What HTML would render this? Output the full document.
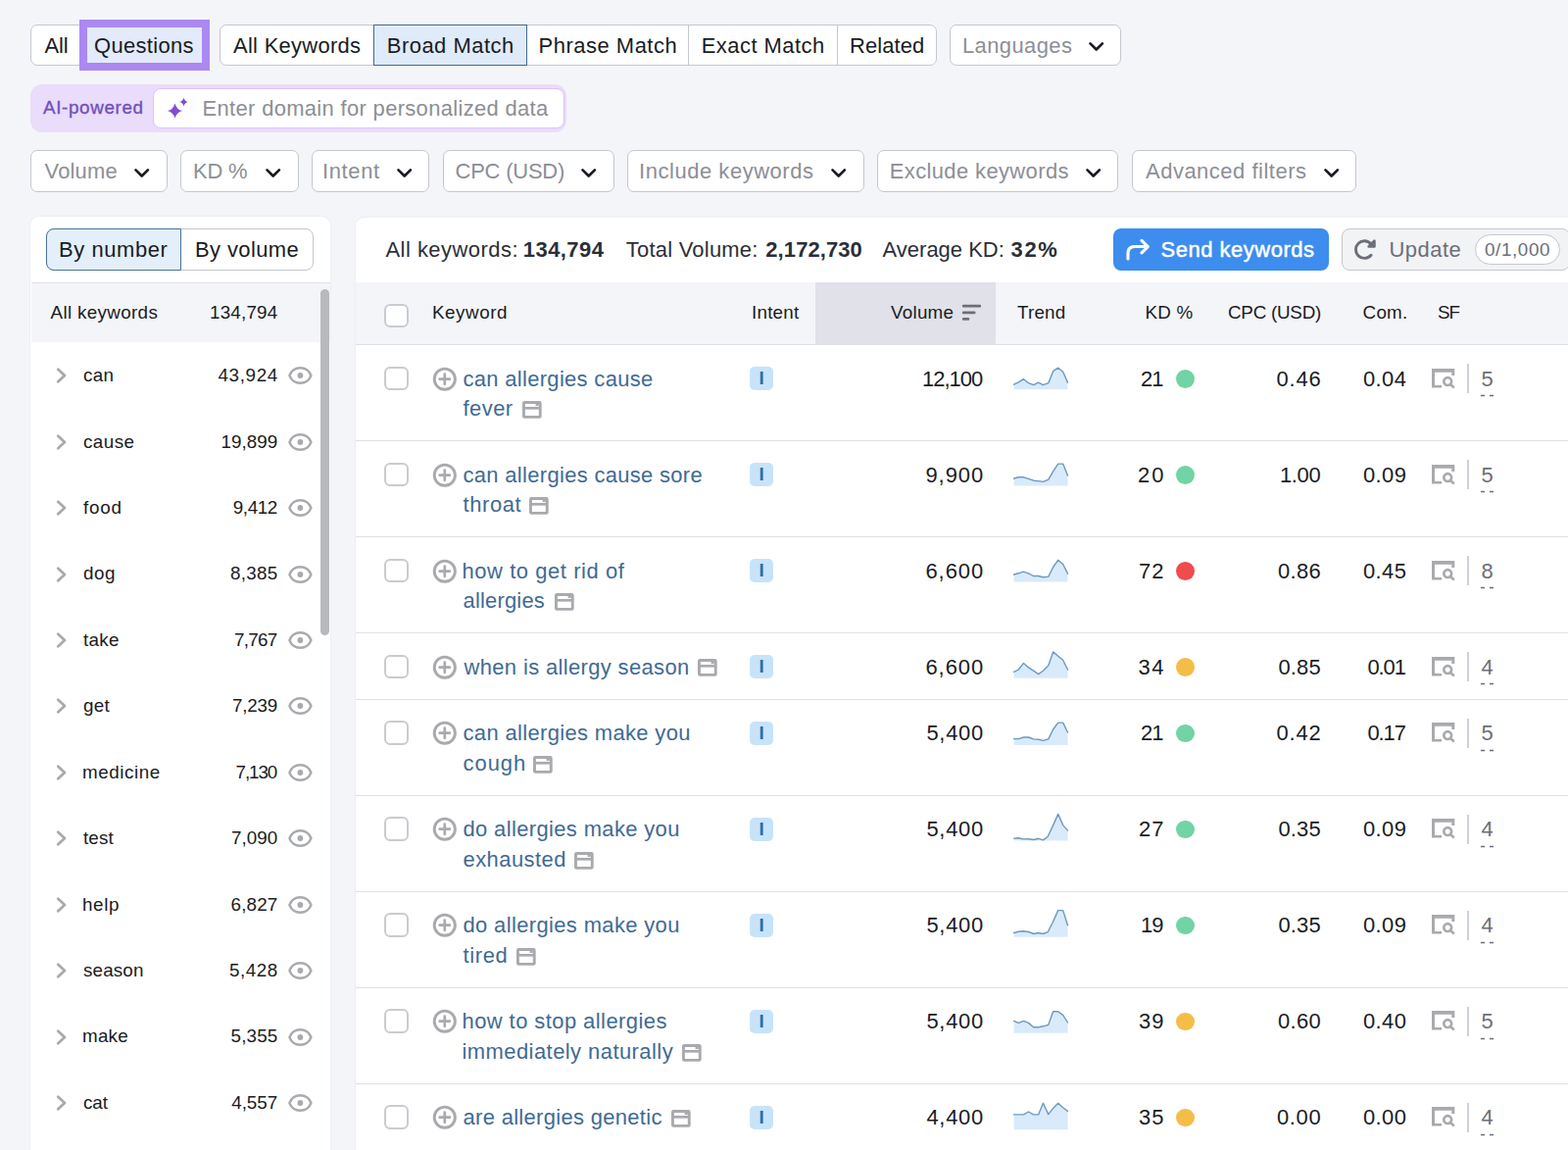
<!DOCTYPE html>
<html lang="en"><head><meta charset="utf-8"><title>Keyword Magic Tool</title>
<style>
html,body{margin:0;padding:0}
body{width:1600px;height:1173px;overflow:hidden;position:relative;background:#f4f5f9;font-family:"Liberation Sans", sans-serif}
.a{position:absolute;box-sizing:border-box;display:block}
.t{white-space:nowrap}
</style></head><body>
<div class="a" style="left:31px;top:24.8px;width:180px;height:42px;background:#fff;border:1px solid #c4c7cf;border-radius:7px;"></div>
<span class="a t" id="t0" style="left:45.50px;top:36.00px;font-size:21.95px;line-height:21.95px;color:#191b23;letter-spacing:-0.133px;">All</span>
<div class="a" style="left:81px;top:20.2px;width:133.2px;height:51.5px;background:#ab89f2;"></div>
<div class="a" style="left:88.8px;top:28.2px;width:117.6px;height:35.8px;background:#e3eafb;"></div>
<span class="a t" id="t1" style="left:96.00px;top:36.00px;font-size:21.95px;line-height:21.95px;color:#191b23;letter-spacing:0.336px;">Questions</span>
<div class="a" style="left:224px;top:24.8px;width:732px;height:42px;background:#fff;border:1px solid #c4c7cf;border-radius:7px;"></div>
<div class="a" style="left:381px;top:24.8px;width:157px;height:42px;background:#e0ebfa;border:1px solid #41698f;"></div>
<div class="a" style="left:702px;top:25.8px;width:1px;height:40px;background:#c4c7cf;"></div>
<div class="a" style="left:854px;top:25.8px;width:1px;height:40px;background:#c4c7cf;"></div>
<span class="a t" id="t2" style="left:238.00px;top:36.00px;font-size:21.95px;line-height:21.95px;color:#191b23;letter-spacing:0.288px;">All Keywords</span>
<span class="a t" id="t3" style="left:394.75px;top:36.00px;font-size:21.95px;line-height:21.95px;color:#191b23;letter-spacing:0.508px;">Broad Match</span>
<span class="a t" id="t4" style="left:549.50px;top:36.00px;font-size:21.95px;line-height:21.95px;color:#191b23;letter-spacing:0.532px;">Phrase Match</span>
<span class="a t" id="t5" style="left:715.70px;top:36.00px;font-size:21.95px;line-height:21.95px;color:#191b23;letter-spacing:0.480px;">Exact Match</span>
<span class="a t" id="t6" style="left:867.00px;top:36.00px;font-size:21.95px;line-height:21.95px;color:#191b23;letter-spacing:0.096px;">Related</span>
<div class="a" style="left:969px;top:24.8px;width:175px;height:42px;background:#fff;border:1px solid #c4c7cf;border-radius:7px;"></div>
<span class="a t" id="t7" style="left:982.00px;top:36.00px;font-size:21.95px;line-height:21.95px;color:#8c8e96;letter-spacing:0.424px;">Languages</span>
<svg class="a" style="left:1109px;top:41px;" width="20" height="14" viewBox="0 0 20 14"><path d="M3.5 3.4 L9.7 9.5 L15.9 3.4" fill="none" stroke="#191b23" stroke-width="2.7" stroke-linecap="round" stroke-linejoin="round"/></svg>
<div class="a" style="left:31px;top:86px;width:546.5px;height:48.8px;background:#eadcfb;border-radius:12px;"></div>
<div class="a" style="left:155.5px;top:89.5px;width:420px;height:41.5px;background:#fff;border:1px solid #dcc4f7;border-radius:8px;"></div>
<span class="a t" id="t8" style="left:44.00px;top:101.00px;font-size:18.81px;line-height:18.81px;color:#7150bc;letter-spacing:0.648px;-webkit-text-stroke:0.35px #7150bc;">AI-powered</span>
<svg class="a" style="left:170px;top:99px;" width="24" height="24" viewBox="0 0 24 24"><path d="M8.5 6.40 Q10.04 12.56 16.20 14.1 Q10.04 15.64 8.5 21.80 Q6.96 15.64 0.80 14.1 Q6.96 12.56 8.5 6.40 Z" fill="#7d4fcf"/><path d="M17.5 0.70 Q18.38 4.22 21.90 5.1 Q18.38 5.98 17.5 9.50 Q16.62 5.98 13.10 5.1 Q16.62 4.22 17.5 0.70 Z" fill="#7d4fcf"/></svg>
<span class="a t" id="t9" style="left:206.60px;top:100.00px;font-size:21.95px;line-height:21.95px;color:#8c8e96;letter-spacing:0.337px;">Enter domain for personalized data</span>
<div class="a" style="left:31px;top:153.3px;width:139.5px;height:42.5px;background:#fff;border:1px solid #c4c7cf;border-radius:7px;"></div>
<span class="a t" id="t10" style="left:45.50px;top:164.00px;font-size:21.95px;line-height:21.95px;color:#8c8e96;letter-spacing:0.206px;">Volume</span>
<svg class="a" style="left:135px;top:169.5px;" width="20" height="14" viewBox="0 0 20 14"><path d="M3.5 3.4 L9.7 9.5 L15.9 3.4" fill="none" stroke="#191b23" stroke-width="2.7" stroke-linecap="round" stroke-linejoin="round"/></svg>
<div class="a" style="left:183.5px;top:153.3px;width:121.0px;height:42.5px;background:#fff;border:1px solid #c4c7cf;border-radius:7px;"></div>
<span class="a t" id="t11" style="left:197.00px;top:164.00px;font-size:21.95px;line-height:21.95px;color:#8c8e96;letter-spacing:-0.191px;">KD %</span>
<svg class="a" style="left:269px;top:169.5px;" width="20" height="14" viewBox="0 0 20 14"><path d="M3.5 3.4 L9.7 9.5 L15.9 3.4" fill="none" stroke="#191b23" stroke-width="2.7" stroke-linecap="round" stroke-linejoin="round"/></svg>
<div class="a" style="left:317.5px;top:153.3px;width:120.5px;height:42.5px;background:#fff;border:1px solid #c4c7cf;border-radius:7px;"></div>
<span class="a t" id="t12" style="left:329.00px;top:164.00px;font-size:21.95px;line-height:21.95px;color:#8c8e96;letter-spacing:0.641px;">Intent</span>
<svg class="a" style="left:403px;top:169.5px;" width="20" height="14" viewBox="0 0 20 14"><path d="M3.5 3.4 L9.7 9.5 L15.9 3.4" fill="none" stroke="#191b23" stroke-width="2.7" stroke-linecap="round" stroke-linejoin="round"/></svg>
<div class="a" style="left:452px;top:153.3px;width:175px;height:42.5px;background:#fff;border:1px solid #c4c7cf;border-radius:7px;"></div>
<span class="a t" id="t13" style="left:464.50px;top:164.00px;font-size:21.95px;line-height:21.95px;color:#8c8e96;letter-spacing:-0.192px;">CPC (USD)</span>
<svg class="a" style="left:591px;top:169.5px;" width="20" height="14" viewBox="0 0 20 14"><path d="M3.5 3.4 L9.7 9.5 L15.9 3.4" fill="none" stroke="#191b23" stroke-width="2.7" stroke-linecap="round" stroke-linejoin="round"/></svg>
<div class="a" style="left:640px;top:153.3px;width:241.75px;height:42.5px;background:#fff;border:1px solid #c4c7cf;border-radius:7px;"></div>
<span class="a t" id="t14" style="left:652.00px;top:164.00px;font-size:21.95px;line-height:21.95px;color:#8c8e96;letter-spacing:0.565px;">Include keywords</span>
<svg class="a" style="left:845.5px;top:169.5px;" width="20" height="14" viewBox="0 0 20 14"><path d="M3.5 3.4 L9.7 9.5 L15.9 3.4" fill="none" stroke="#191b23" stroke-width="2.7" stroke-linecap="round" stroke-linejoin="round"/></svg>
<div class="a" style="left:895px;top:153.3px;width:246px;height:42.5px;background:#fff;border:1px solid #c4c7cf;border-radius:7px;"></div>
<span class="a t" id="t15" style="left:907.75px;top:164.00px;font-size:21.95px;line-height:21.95px;color:#8c8e96;letter-spacing:0.395px;">Exclude keywords</span>
<svg class="a" style="left:1105.5px;top:169.5px;" width="20" height="14" viewBox="0 0 20 14"><path d="M3.5 3.4 L9.7 9.5 L15.9 3.4" fill="none" stroke="#191b23" stroke-width="2.7" stroke-linecap="round" stroke-linejoin="round"/></svg>
<div class="a" style="left:1154.5px;top:153.3px;width:229.5px;height:42.5px;background:#fff;border:1px solid #c4c7cf;border-radius:7px;"></div>
<span class="a t" id="t16" style="left:1169.00px;top:164.00px;font-size:21.95px;line-height:21.95px;color:#8c8e96;letter-spacing:0.525px;">Advanced filters</span>
<svg class="a" style="left:1348.75px;top:169.5px;" width="20" height="14" viewBox="0 0 20 14"><path d="M3.5 3.4 L9.7 9.5 L15.9 3.4" fill="none" stroke="#191b23" stroke-width="2.7" stroke-linecap="round" stroke-linejoin="round"/></svg>
<div class="a" style="left:30.2px;top:220.3px;width:307.4px;height:960px;background:#fff;border:1px solid #eeeff3;border-radius:10px 10px 0 0;"></div>
<div class="a" style="left:47px;top:233px;width:273px;height:42.7px;background:#fff;border:1px solid #c4c7cf;border-radius:8px;"></div>
<div class="a" style="left:47px;top:233px;width:138px;height:42.7px;background:#e3effb;border:1.4px solid #4a7397;border-radius:8px 0 0 8px;"></div>
<span class="a t" id="t17" style="left:60.00px;top:244.00px;font-size:21.95px;line-height:21.95px;color:#191b23;letter-spacing:0.591px;">By number</span>
<span class="a t" id="t18" style="left:199.00px;top:244.00px;font-size:21.95px;line-height:21.95px;color:#191b23;letter-spacing:0.410px;">By volume</span>
<div class="a" style="left:31.5px;top:287.5px;width:305px;height:1px;background:#e0e1e9;"></div>
<div class="a" style="left:31.5px;top:288.5px;width:305px;height:60.5px;background:#f4f5f9;"></div>
<span class="a t" id="t19" style="left:51.50px;top:310.00px;font-size:18.81px;line-height:18.81px;color:#191b23;letter-spacing:0.344px;">All keywords</span>
<span class="a t" id="t20" style="left:214.00px;top:310.00px;font-size:18.81px;line-height:18.81px;color:#191b23;letter-spacing:0.217px;">134,794</span>
<div class="a" style="left:326.7px;top:294.5px;width:9px;height:353.5px;background:#b8b9bd;border-radius:4.5px;"></div>
<svg class="a" style="left:55px;top:373.3px;" width="16" height="20" viewBox="0 0 16 20"><path d="M4.3 3.8 L11 10 L4.3 16.2" fill="none" stroke="#a9aaae" stroke-width="2.8" stroke-linecap="round" stroke-linejoin="round"/></svg>
<span class="a t" id="t21" style="left:85.00px;top:374.00px;font-size:18.81px;line-height:18.81px;color:#191b23;letter-spacing:0.321px;">can</span>
<span class="a t" id="t22" style="left:222.50px;top:374.00px;font-size:18.81px;line-height:18.81px;color:#191b23;letter-spacing:0.651px;">43,924</span>
<svg class="a" style="left:293px;top:373.3px;" width="27" height="20" viewBox="0 0 27 20"><path d="M2.4 10 A11.66 11.66 0 0 1 24.4 10 A11.66 11.66 0 0 1 2.4 10 Z" fill="none" stroke="#a9aaae" stroke-width="2.4" stroke-linejoin="round"/><circle cx="13.4" cy="10" r="2.9" fill="#a9aaae"/></svg>
<svg class="a" style="left:55px;top:440.72px;" width="16" height="20" viewBox="0 0 16 20"><path d="M4.3 3.8 L11 10 L4.3 16.2" fill="none" stroke="#a9aaae" stroke-width="2.8" stroke-linecap="round" stroke-linejoin="round"/></svg>
<span class="a t" id="t23" style="left:85.00px;top:442.00px;font-size:18.81px;line-height:18.81px;color:#191b23;letter-spacing:0.446px;">cause</span>
<span class="a t" id="t24" style="left:225.50px;top:442.00px;font-size:18.81px;line-height:18.81px;color:#191b23;letter-spacing:0.051px;">19,899</span>
<svg class="a" style="left:293px;top:440.72px;" width="27" height="20" viewBox="0 0 27 20"><path d="M2.4 10 A11.66 11.66 0 0 1 24.4 10 A11.66 11.66 0 0 1 2.4 10 Z" fill="none" stroke="#a9aaae" stroke-width="2.4" stroke-linejoin="round"/><circle cx="13.4" cy="10" r="2.9" fill="#a9aaae"/></svg>
<svg class="a" style="left:55px;top:508.14px;" width="16" height="20" viewBox="0 0 16 20"><path d="M4.3 3.8 L11 10 L4.3 16.2" fill="none" stroke="#a9aaae" stroke-width="2.8" stroke-linecap="round" stroke-linejoin="round"/></svg>
<span class="a t" id="t25" style="left:85.00px;top:509.00px;font-size:18.81px;line-height:18.81px;color:#191b23;letter-spacing:0.787px;">food</span>
<span class="a t" id="t26" style="left:237.80px;top:509.00px;font-size:18.81px;line-height:18.81px;color:#191b23;letter-spacing:-0.398px;">9,412</span>
<svg class="a" style="left:293px;top:508.14px;" width="27" height="20" viewBox="0 0 27 20"><path d="M2.4 10 A11.66 11.66 0 0 1 24.4 10 A11.66 11.66 0 0 1 2.4 10 Z" fill="none" stroke="#a9aaae" stroke-width="2.4" stroke-linejoin="round"/><circle cx="13.4" cy="10" r="2.9" fill="#a9aaae"/></svg>
<svg class="a" style="left:55px;top:575.56px;" width="16" height="20" viewBox="0 0 16 20"><path d="M4.3 3.8 L11 10 L4.3 16.2" fill="none" stroke="#a9aaae" stroke-width="2.8" stroke-linecap="round" stroke-linejoin="round"/></svg>
<span class="a t" id="t27" style="left:85.00px;top:576.00px;font-size:18.81px;line-height:18.81px;color:#191b23;letter-spacing:0.539px;">dog</span>
<span class="a t" id="t28" style="left:235.00px;top:576.00px;font-size:18.81px;line-height:18.81px;color:#191b23;letter-spacing:0.302px;">8,385</span>
<svg class="a" style="left:293px;top:575.56px;" width="27" height="20" viewBox="0 0 27 20"><path d="M2.4 10 A11.66 11.66 0 0 1 24.4 10 A11.66 11.66 0 0 1 2.4 10 Z" fill="none" stroke="#a9aaae" stroke-width="2.4" stroke-linejoin="round"/><circle cx="13.4" cy="10" r="2.9" fill="#a9aaae"/></svg>
<svg class="a" style="left:55px;top:642.98px;" width="16" height="20" viewBox="0 0 16 20"><path d="M4.3 3.8 L11 10 L4.3 16.2" fill="none" stroke="#a9aaae" stroke-width="2.8" stroke-linecap="round" stroke-linejoin="round"/></svg>
<span class="a t" id="t29" style="left:85.00px;top:644.00px;font-size:18.81px;line-height:18.81px;color:#191b23;letter-spacing:0.308px;">take</span>
<span class="a t" id="t30" style="left:239.00px;top:644.00px;font-size:18.81px;line-height:18.81px;color:#191b23;letter-spacing:-0.698px;">7,767</span>
<svg class="a" style="left:293px;top:642.98px;" width="27" height="20" viewBox="0 0 27 20"><path d="M2.4 10 A11.66 11.66 0 0 1 24.4 10 A11.66 11.66 0 0 1 2.4 10 Z" fill="none" stroke="#a9aaae" stroke-width="2.4" stroke-linejoin="round"/><circle cx="13.4" cy="10" r="2.9" fill="#a9aaae"/></svg>
<svg class="a" style="left:55px;top:710.4000000000001px;" width="16" height="20" viewBox="0 0 16 20"><path d="M4.3 3.8 L11 10 L4.3 16.2" fill="none" stroke="#a9aaae" stroke-width="2.8" stroke-linecap="round" stroke-linejoin="round"/></svg>
<span class="a t" id="t31" style="left:85.00px;top:711.00px;font-size:18.81px;line-height:18.81px;color:#191b23;letter-spacing:0.291px;">get</span>
<span class="a t" id="t32" style="left:237.00px;top:711.00px;font-size:18.81px;line-height:18.81px;color:#191b23;letter-spacing:-0.198px;">7,239</span>
<svg class="a" style="left:293px;top:710.4000000000001px;" width="27" height="20" viewBox="0 0 27 20"><path d="M2.4 10 A11.66 11.66 0 0 1 24.4 10 A11.66 11.66 0 0 1 2.4 10 Z" fill="none" stroke="#a9aaae" stroke-width="2.4" stroke-linejoin="round"/><circle cx="13.4" cy="10" r="2.9" fill="#a9aaae"/></svg>
<svg class="a" style="left:55px;top:777.8199999999999px;" width="16" height="20" viewBox="0 0 16 20"><path d="M4.3 3.8 L11 10 L4.3 16.2" fill="none" stroke="#a9aaae" stroke-width="2.8" stroke-linecap="round" stroke-linejoin="round"/></svg>
<span class="a t" id="t33" style="left:84.00px;top:779.00px;font-size:18.81px;line-height:18.81px;color:#191b23;letter-spacing:0.560px;">medicine</span>
<span class="a t" id="t34" style="left:240.61px;top:779.00px;font-size:18.81px;line-height:18.81px;color:#191b23;letter-spacing:-1.100px;">7,130</span>
<svg class="a" style="left:293px;top:777.8199999999999px;" width="27" height="20" viewBox="0 0 27 20"><path d="M2.4 10 A11.66 11.66 0 0 1 24.4 10 A11.66 11.66 0 0 1 2.4 10 Z" fill="none" stroke="#a9aaae" stroke-width="2.4" stroke-linejoin="round"/><circle cx="13.4" cy="10" r="2.9" fill="#a9aaae"/></svg>
<svg class="a" style="left:55px;top:845.24px;" width="16" height="20" viewBox="0 0 16 20"><path d="M4.3 3.8 L11 10 L4.3 16.2" fill="none" stroke="#a9aaae" stroke-width="2.8" stroke-linecap="round" stroke-linejoin="round"/></svg>
<span class="a t" id="t35" style="left:85.00px;top:846.00px;font-size:18.81px;line-height:18.81px;color:#191b23;letter-spacing:0.137px;">test</span>
<span class="a t" id="t36" style="left:236.00px;top:846.00px;font-size:18.81px;line-height:18.81px;color:#191b23;letter-spacing:0.052px;">7,090</span>
<svg class="a" style="left:293px;top:845.24px;" width="27" height="20" viewBox="0 0 27 20"><path d="M2.4 10 A11.66 11.66 0 0 1 24.4 10 A11.66 11.66 0 0 1 2.4 10 Z" fill="none" stroke="#a9aaae" stroke-width="2.4" stroke-linejoin="round"/><circle cx="13.4" cy="10" r="2.9" fill="#a9aaae"/></svg>
<svg class="a" style="left:55px;top:912.6600000000001px;" width="16" height="20" viewBox="0 0 16 20"><path d="M4.3 3.8 L11 10 L4.3 16.2" fill="none" stroke="#a9aaae" stroke-width="2.8" stroke-linecap="round" stroke-linejoin="round"/></svg>
<span class="a t" id="t37" style="left:84.00px;top:914.00px;font-size:18.81px;line-height:18.81px;color:#191b23;letter-spacing:0.636px;">help</span>
<span class="a t" id="t38" style="left:235.60px;top:914.00px;font-size:18.81px;line-height:18.81px;color:#191b23;letter-spacing:0.152px;">6,827</span>
<svg class="a" style="left:293px;top:912.6600000000001px;" width="27" height="20" viewBox="0 0 27 20"><path d="M2.4 10 A11.66 11.66 0 0 1 24.4 10 A11.66 11.66 0 0 1 2.4 10 Z" fill="none" stroke="#a9aaae" stroke-width="2.4" stroke-linejoin="round"/><circle cx="13.4" cy="10" r="2.9" fill="#a9aaae"/></svg>
<svg class="a" style="left:55px;top:980.0799999999999px;" width="16" height="20" viewBox="0 0 16 20"><path d="M4.3 3.8 L11 10 L4.3 16.2" fill="none" stroke="#a9aaae" stroke-width="2.8" stroke-linecap="round" stroke-linejoin="round"/></svg>
<span class="a t" id="t39" style="left:85.00px;top:981.00px;font-size:18.81px;line-height:18.81px;color:#191b23;letter-spacing:0.166px;">season</span>
<span class="a t" id="t40" style="left:234.00px;top:981.00px;font-size:18.81px;line-height:18.81px;color:#191b23;letter-spacing:0.552px;">5,428</span>
<svg class="a" style="left:293px;top:980.0799999999999px;" width="27" height="20" viewBox="0 0 27 20"><path d="M2.4 10 A11.66 11.66 0 0 1 24.4 10 A11.66 11.66 0 0 1 2.4 10 Z" fill="none" stroke="#a9aaae" stroke-width="2.4" stroke-linejoin="round"/><circle cx="13.4" cy="10" r="2.9" fill="#a9aaae"/></svg>
<svg class="a" style="left:55px;top:1047.5px;" width="16" height="20" viewBox="0 0 16 20"><path d="M4.3 3.8 L11 10 L4.3 16.2" fill="none" stroke="#a9aaae" stroke-width="2.8" stroke-linecap="round" stroke-linejoin="round"/></svg>
<span class="a t" id="t41" style="left:84.00px;top:1048.00px;font-size:18.81px;line-height:18.81px;color:#191b23;letter-spacing:0.228px;">make</span>
<span class="a t" id="t42" style="left:235.60px;top:1048.00px;font-size:18.81px;line-height:18.81px;color:#191b23;letter-spacing:0.152px;">5,355</span>
<svg class="a" style="left:293px;top:1047.5px;" width="27" height="20" viewBox="0 0 27 20"><path d="M2.4 10 A11.66 11.66 0 0 1 24.4 10 A11.66 11.66 0 0 1 2.4 10 Z" fill="none" stroke="#a9aaae" stroke-width="2.4" stroke-linejoin="round"/><circle cx="13.4" cy="10" r="2.9" fill="#a9aaae"/></svg>
<svg class="a" style="left:55px;top:1114.92px;" width="16" height="20" viewBox="0 0 16 20"><path d="M4.3 3.8 L11 10 L4.3 16.2" fill="none" stroke="#a9aaae" stroke-width="2.8" stroke-linecap="round" stroke-linejoin="round"/></svg>
<span class="a t" id="t43" style="left:85.00px;top:1116.00px;font-size:18.81px;line-height:18.81px;color:#191b23;letter-spacing:-0.078px;">cat</span>
<span class="a t" id="t44" style="left:236.20px;top:1116.00px;font-size:18.81px;line-height:18.81px;color:#191b23;">4,557</span>
<svg class="a" style="left:293px;top:1114.92px;" width="27" height="20" viewBox="0 0 27 20"><path d="M2.4 10 A11.66 11.66 0 0 1 24.4 10 A11.66 11.66 0 0 1 2.4 10 Z" fill="none" stroke="#a9aaae" stroke-width="2.4" stroke-linejoin="round"/><circle cx="13.4" cy="10" r="2.9" fill="#a9aaae"/></svg>
<div class="a" style="left:361.5px;top:220.5px;width:1260px;height:960px;background:#fff;border:1px solid #eeeff3;border-radius:10px 0 0 0;"></div>
<span class="a t" id="t45" style="left:393.50px;top:244.00px;font-size:21.95px;line-height:21.95px;color:#2b2e38;letter-spacing:0.480px;">All keywords:</span>
<span class="a t" id="t46" style="left:533.80px;top:244.00px;font-size:21.95px;line-height:21.95px;color:#2b2e38;font-weight:700;letter-spacing:0.465px;">134,794</span>
<span class="a t" id="t47" style="left:638.80px;top:244.00px;font-size:21.95px;line-height:21.95px;color:#2b2e38;letter-spacing:0.241px;">Total Volume:</span>
<span class="a t" id="t48" style="left:781.30px;top:244.00px;font-size:21.95px;line-height:21.95px;color:#2b2e38;font-weight:700;letter-spacing:0.111px;">2,172,730</span>
<span class="a t" id="t49" style="left:900.60px;top:244.00px;font-size:21.95px;line-height:21.95px;color:#2b2e38;letter-spacing:0.021px;">Average KD:</span>
<span class="a t" id="t50" style="left:1031.50px;top:244.00px;font-size:21.95px;line-height:21.95px;color:#2b2e38;font-weight:700;letter-spacing:1.692px;">32%</span>
<div class="a" style="left:1136px;top:233px;width:220px;height:42.5px;background:#3d8dee;border-radius:8px;"></div>
<svg class="a" style="left:1146px;top:242px;" width="30" height="26" viewBox="0 0 30 26"><path d="M5 22 V16.3 C5 11.5 7.6 9.56 12.4 9.56 H24.6" fill="none" stroke="#fff" stroke-width="3.1" stroke-linecap="round" stroke-linejoin="round"/><path d="M19 3.3 L25.3 9.56 L19 15.9" fill="none" stroke="#fff" stroke-width="3.1" stroke-linecap="round" stroke-linejoin="round"/></svg>
<span class="a t" id="t51" style="left:1184.50px;top:244.00px;font-size:21.95px;line-height:21.95px;color:#fff;letter-spacing:0.539px;-webkit-text-stroke:0.5px #fff;">Send keywords</span>
<div class="a" style="left:1369px;top:233px;width:232.5px;height:42.5px;background:#f2f3f5;border:1.3px solid #c6c8cf;border-radius:8px;"></div>
<svg class="a" style="left:1380px;top:241px;" width="26" height="26" viewBox="0 0 26 26"><path d="M18.84 7.71 A8.8 8.8 0 1 0 19.04 19.26" fill="none" stroke="#6c6e79" stroke-width="2.9" stroke-linecap="round"/><path d="M22.4 4.7 V10.4 H16.7 Z" fill="#6c6e79" stroke="#6c6e79" stroke-width="2.7" stroke-linejoin="round" stroke-linecap="round"/></svg>
<span class="a t" id="t52" style="left:1417.50px;top:244.00px;font-size:21.95px;line-height:21.95px;color:#6c6e79;letter-spacing:0.510px;">Update</span>
<div class="a" style="left:1504.5px;top:239px;width:87px;height:30.5px;background:#fff;border:1px solid #c4c7cf;border-radius:16px;"></div>
<span class="a t" id="t53" style="left:1515.00px;top:246.00px;font-size:18.81px;line-height:18.81px;color:#6c6e79;letter-spacing:0.623px;">0/1,000</span>
<div class="a" style="left:362.5px;top:288px;width:1240px;height:63.5px;background:#f4f5f9;"></div>
<div class="a" style="left:832px;top:288px;width:184px;height:63.5px;background:#e0e1e9;"></div>
<div class="a" style="left:362.5px;top:351px;width:1240px;height:1.2px;background:#dfe0e6;"></div>
<div class="a" style="left:392px;top:309.7px;width:24.5px;height:24.5px;background:#fff;border:2px solid #c9cbd2;border-radius:6px;"></div>
<span class="a t" id="t54" style="left:441.00px;top:310.00px;font-size:18.81px;line-height:18.81px;color:#191b23;letter-spacing:0.552px;">Keyword</span>
<span class="a t" id="t55" style="left:767.00px;top:310.00px;font-size:18.81px;line-height:18.81px;color:#191b23;letter-spacing:0.238px;">Intent</span>
<span class="a t" id="t56" style="left:909.00px;top:310.00px;font-size:18.81px;line-height:18.81px;color:#191b23;letter-spacing:0.250px;">Volume</span>
<svg class="a" style="left:981px;top:309px;" width="22" height="20" viewBox="0 0 22 20"><path d="M2.2 3.2 H18.8 M2.2 9.9 H13.2 M2.2 16.4 H7" stroke="#6c6e79" stroke-width="2.7" stroke-linecap="round" fill="none"/></svg>
<span class="a t" id="t57" style="left:1038.00px;top:310.00px;font-size:18.81px;line-height:18.81px;color:#191b23;letter-spacing:0.199px;">Trend</span>
<span class="a t" id="t58" style="left:1168.50px;top:310.00px;font-size:18.81px;line-height:18.81px;color:#191b23;letter-spacing:0.217px;">KD %</span>
<span class="a t" id="t59" style="left:1253.00px;top:310.00px;font-size:18.81px;line-height:18.81px;color:#191b23;letter-spacing:-0.233px;">CPC (USD)</span>
<span class="a t" id="t60" style="left:1390.60px;top:310.00px;font-size:18.81px;line-height:18.81px;color:#191b23;letter-spacing:0.234px;">Com.</span>
<span class="a t" id="t61" style="left:1467.00px;top:310.00px;font-size:18.81px;line-height:18.81px;color:#191b23;letter-spacing:-1.100px;">SF</span>
<div class="a" style="left:392px;top:373.8px;width:24.5px;height:24.5px;background:#fff;border:2px solid #c9cbd2;border-radius:6px;"></div>
<svg class="a" style="left:441px;top:373.5px;" width="26" height="26" viewBox="0 0 26 26"><circle cx="12.8" cy="12.7" r="10.6" fill="none" stroke="#a9aaae" stroke-width="2.9"/><path d="M12.8 7.6 V17.8 M7.7 12.7 H17.9" stroke="#a9aaae" stroke-width="2.7" stroke-linecap="round"/></svg>
<span class="a t" id="t62" style="left:472.50px;top:376.00px;font-size:21.95px;line-height:21.95px;color:#3f6a93;letter-spacing:0.327px;">can allergies cause</span>
<span class="a t" id="t63" style="left:472.50px;top:406.00px;font-size:21.95px;line-height:21.95px;color:#3f6a93;letter-spacing:0.456px;">fever</span>
<svg class="a" style="left:532.75px;top:409.0px;" width="20" height="18.2" viewBox="0 0 20 18.2"><rect x="1.45" y="1.45" width="16.8" height="14.9" rx="0.8" fill="none" stroke="#a9aaae" stroke-width="2.9"/><path d="M1.4 7.3 H18.3" stroke="#a9aaae" stroke-width="2.7"/><rect x="13.6" y="2.9" width="3.2" height="2.1" fill="#a9aaae"/></svg>
<div class="a" style="left:765px;top:374px;width:24px;height:24.3px;background:#c7e3fa;border-radius:5px;"></div>
<span class="a t" id="t64" style="left:774.60px;top:377.00px;font-size:18.81px;line-height:18.81px;color:#2f6ca3;font-weight:700;">I</span>
<span class="a t" id="t65" style="left:941.00px;top:376.00px;font-size:21.95px;line-height:21.95px;color:#191b23;letter-spacing:-0.982px;">12,100</span>
<svg class="a" style="left:1032px;top:366px;" width="62" height="36" viewBox="0 0 62 36"><path d="M2.6 26.2 L7.3 23.8 L12.5 20.7 L17.5 24.7 L22.6 26.7 L27.6 24.1 L32.4 26.7 L37.8 24.7 L42.6 12.7 L47.7 9.2 L52.7 13.3 L57.5 24.1 L57.5 31.2 L2.6 31.2 Z" fill="#d9eafa"/><path d="M2.6 26.2 L7.3 23.8 L12.5 20.7 L17.5 24.7 L22.6 26.7 L27.6 24.1 L32.4 26.7 L37.8 24.7 L42.6 12.7 L47.7 9.2 L52.7 13.3 L57.5 24.1" fill="none" stroke="#6d99be" stroke-width="1.4" stroke-linejoin="round" stroke-linecap="round"/></svg>
<span class="a t" id="t66" style="left:1164.09px;top:376.00px;font-size:21.95px;line-height:21.95px;color:#191b23;letter-spacing:-1.100px;">21</span>
<div class="a" style="left:1200px;top:377.3px;width:18.6px;height:18.6px;background:#72d3a4;border-radius:10px;"></div>
<span class="a t" id="t67" style="left:1302.60px;top:376.00px;font-size:21.95px;line-height:21.95px;color:#191b23;letter-spacing:0.766px;">0.46</span>
<span class="a t" id="t68" style="left:1391.00px;top:376.00px;font-size:21.95px;line-height:21.95px;color:#191b23;letter-spacing:0.399px;">0.04</span>
<svg class="a" style="left:1460.6px;top:375.75px;" width="25" height="21" viewBox="0 0 25 21"><path d="M0 0 H23.3 V6.9 H20.3 V3.75 H3 V16.9 H10.1 V19.5 H0 Z" fill="#a9aaae"/><circle cx="16.2" cy="13.1" r="3.9" fill="none" stroke="#a9aaae" stroke-width="2.7"/><path d="M19 16 L22 18.7" stroke="#a9aaae" stroke-width="2.7" stroke-linecap="round"/></svg>
<div class="a" style="left:1497.4px;top:371px;width:1.5px;height:30.3px;background:#cfd1d8;"></div>
<span class="a t" id="t69" style="left:1511.60px;top:376.00px;font-size:21.95px;line-height:21.95px;color:#6c6e79;">5</span>
<svg class="a" style="left:1510px;top:402px;" width="16" height="3" viewBox="0 0 16 3"><path d="M0.9 1.5 H5 M9.9 1.5 H14" stroke="#6c6e79" stroke-width="1.5"/></svg>
<div class="a" style="left:362.5px;top:449px;width:1240px;height:1px;background:#dfe0e6;"></div>
<div class="a" style="left:392px;top:471.8px;width:24.5px;height:24.5px;background:#fff;border:2px solid #c9cbd2;border-radius:6px;"></div>
<svg class="a" style="left:441px;top:471.5px;" width="26" height="26" viewBox="0 0 26 26"><circle cx="12.8" cy="12.7" r="10.6" fill="none" stroke="#a9aaae" stroke-width="2.9"/><path d="M12.8 7.6 V17.8 M7.7 12.7 H17.9" stroke="#a9aaae" stroke-width="2.7" stroke-linecap="round"/></svg>
<span class="a t" id="t70" style="left:472.50px;top:474.00px;font-size:21.95px;line-height:21.95px;color:#3f6a93;letter-spacing:0.331px;">can allergies cause sore</span>
<span class="a t" id="t71" style="left:472.50px;top:504.00px;font-size:21.95px;line-height:21.95px;color:#3f6a93;letter-spacing:0.597px;">throat</span>
<svg class="a" style="left:540.3px;top:506.99999999999994px;" width="20" height="18.2" viewBox="0 0 20 18.2"><rect x="1.45" y="1.45" width="16.8" height="14.9" rx="0.8" fill="none" stroke="#a9aaae" stroke-width="2.9"/><path d="M1.4 7.3 H18.3" stroke="#a9aaae" stroke-width="2.7"/><rect x="13.6" y="2.9" width="3.2" height="2.1" fill="#a9aaae"/></svg>
<div class="a" style="left:765px;top:472px;width:24px;height:24.3px;background:#c7e3fa;border-radius:5px;"></div>
<span class="a t" id="t72" style="left:774.60px;top:475.00px;font-size:18.81px;line-height:18.81px;color:#2f6ca3;font-weight:700;">I</span>
<span class="a t" id="t73" style="left:944.40px;top:474.00px;font-size:21.95px;line-height:21.95px;color:#191b23;letter-spacing:0.974px;">9,900</span>
<svg class="a" style="left:1032px;top:464px;" width="62" height="36" viewBox="0 0 62 36"><path d="M2.6 24.0 L7.3 22.8 L12.7 22.8 L17.5 24.3 L22.9 26.2 L27.6 26.6 L32.4 27.4 L37.8 25.2 L42.6 16.8 L47.7 9.1 L52.7 9.1 L57.5 21.0 L57.5 31.4 L2.6 31.4 Z" fill="#d9eafa"/><path d="M2.6 24.0 L7.3 22.8 L12.7 22.8 L17.5 24.3 L22.9 26.2 L27.6 26.6 L32.4 27.4 L37.8 25.2 L42.6 16.8 L47.7 9.1 L52.7 9.1 L57.5 21.0" fill="none" stroke="#6d99be" stroke-width="1.4" stroke-linejoin="round" stroke-linecap="round"/></svg>
<span class="a t" id="t74" style="left:1161.00px;top:474.00px;font-size:21.95px;line-height:21.95px;color:#191b23;letter-spacing:1.994px;">20</span>
<div class="a" style="left:1200px;top:475.3px;width:18.6px;height:18.6px;background:#72d3a4;border-radius:10px;"></div>
<span class="a t" id="t75" style="left:1306.00px;top:474.00px;font-size:21.95px;line-height:21.95px;color:#191b23;letter-spacing:-0.368px;">1.00</span>
<span class="a t" id="t76" style="left:1391.00px;top:474.00px;font-size:21.95px;line-height:21.95px;color:#191b23;letter-spacing:0.399px;">0.09</span>
<svg class="a" style="left:1460.6px;top:473.75px;" width="25" height="21" viewBox="0 0 25 21"><path d="M0 0 H23.3 V6.9 H20.3 V3.75 H3 V16.9 H10.1 V19.5 H0 Z" fill="#a9aaae"/><circle cx="16.2" cy="13.1" r="3.9" fill="none" stroke="#a9aaae" stroke-width="2.7"/><path d="M19 16 L22 18.7" stroke="#a9aaae" stroke-width="2.7" stroke-linecap="round"/></svg>
<div class="a" style="left:1497.4px;top:469px;width:1.5px;height:30.3px;background:#cfd1d8;"></div>
<span class="a t" id="t77" style="left:1511.60px;top:474.00px;font-size:21.95px;line-height:21.95px;color:#6c6e79;">5</span>
<svg class="a" style="left:1510px;top:500px;" width="16" height="3" viewBox="0 0 16 3"><path d="M0.9 1.5 H5 M9.9 1.5 H14" stroke="#6c6e79" stroke-width="1.5"/></svg>
<div class="a" style="left:362.5px;top:547px;width:1240px;height:1px;background:#dfe0e6;"></div>
<div class="a" style="left:392px;top:569.8px;width:24.5px;height:24.5px;background:#fff;border:2px solid #c9cbd2;border-radius:6px;"></div>
<svg class="a" style="left:441px;top:569.5px;" width="26" height="26" viewBox="0 0 26 26"><circle cx="12.8" cy="12.7" r="10.6" fill="none" stroke="#a9aaae" stroke-width="2.9"/><path d="M12.8 7.6 V17.8 M7.7 12.7 H17.9" stroke="#a9aaae" stroke-width="2.7" stroke-linecap="round"/></svg>
<span class="a t" id="t78" style="left:471.50px;top:572.00px;font-size:21.95px;line-height:21.95px;color:#3f6a93;letter-spacing:0.575px;">how to get rid of</span>
<span class="a t" id="t79" style="left:472.50px;top:602.00px;font-size:21.95px;line-height:21.95px;color:#3f6a93;letter-spacing:0.196px;">allergies</span>
<svg class="a" style="left:566px;top:605.0px;" width="20" height="18.2" viewBox="0 0 20 18.2"><rect x="1.45" y="1.45" width="16.8" height="14.9" rx="0.8" fill="none" stroke="#a9aaae" stroke-width="2.9"/><path d="M1.4 7.3 H18.3" stroke="#a9aaae" stroke-width="2.7"/><rect x="13.6" y="2.9" width="3.2" height="2.1" fill="#a9aaae"/></svg>
<div class="a" style="left:765px;top:570px;width:24px;height:24.3px;background:#c7e3fa;border-radius:5px;"></div>
<span class="a t" id="t80" style="left:774.60px;top:573.00px;font-size:18.81px;line-height:18.81px;color:#2f6ca3;font-weight:700;">I</span>
<span class="a t" id="t81" style="left:944.40px;top:572.00px;font-size:21.95px;line-height:21.95px;color:#191b23;letter-spacing:0.974px;">6,600</span>
<svg class="a" style="left:1032px;top:562px;" width="62" height="36" viewBox="0 0 62 36"><path d="M2.6 24.0 L7.3 22.8 L12.1 21.1 L17.5 22.8 L22.6 25.5 L27.6 25.5 L32.4 26.7 L37.8 26.1 L42.6 16.5 L47.7 9.3 L52.7 13.5 L57.5 23.1 L57.5 31.4 L2.6 31.4 Z" fill="#d9eafa"/><path d="M2.6 24.0 L7.3 22.8 L12.1 21.1 L17.5 22.8 L22.6 25.5 L27.6 25.5 L32.4 26.7 L37.8 26.1 L42.6 16.5 L47.7 9.3 L52.7 13.5 L57.5 23.1" fill="none" stroke="#6d99be" stroke-width="1.4" stroke-linejoin="round" stroke-linecap="round"/></svg>
<span class="a t" id="t82" style="left:1162.00px;top:572.00px;font-size:21.95px;line-height:21.95px;color:#191b23;letter-spacing:0.994px;">72</span>
<div class="a" style="left:1200px;top:573.3px;width:18.6px;height:18.6px;background:#ee4c4f;border-radius:10px;"></div>
<span class="a t" id="t83" style="left:1304.00px;top:572.00px;font-size:21.95px;line-height:21.95px;color:#191b23;letter-spacing:0.299px;">0.86</span>
<span class="a t" id="t84" style="left:1391.00px;top:572.00px;font-size:21.95px;line-height:21.95px;color:#191b23;letter-spacing:0.399px;">0.45</span>
<svg class="a" style="left:1460.6px;top:571.75px;" width="25" height="21" viewBox="0 0 25 21"><path d="M0 0 H23.3 V6.9 H20.3 V3.75 H3 V16.9 H10.1 V19.5 H0 Z" fill="#a9aaae"/><circle cx="16.2" cy="13.1" r="3.9" fill="none" stroke="#a9aaae" stroke-width="2.7"/><path d="M19 16 L22 18.7" stroke="#a9aaae" stroke-width="2.7" stroke-linecap="round"/></svg>
<div class="a" style="left:1497.4px;top:567px;width:1.5px;height:30.3px;background:#cfd1d8;"></div>
<span class="a t" id="t85" style="left:1511.60px;top:572.00px;font-size:21.95px;line-height:21.95px;color:#6c6e79;">8</span>
<svg class="a" style="left:1510px;top:598px;" width="16" height="3" viewBox="0 0 16 3"><path d="M0.9 1.5 H5 M9.9 1.5 H14" stroke="#6c6e79" stroke-width="1.5"/></svg>
<div class="a" style="left:362.5px;top:645px;width:1240px;height:1px;background:#dfe0e6;"></div>
<div class="a" style="left:392px;top:667.8px;width:24.5px;height:24.5px;background:#fff;border:2px solid #c9cbd2;border-radius:6px;"></div>
<svg class="a" style="left:441px;top:667.5px;" width="26" height="26" viewBox="0 0 26 26"><circle cx="12.8" cy="12.7" r="10.6" fill="none" stroke="#a9aaae" stroke-width="2.9"/><path d="M12.8 7.6 V17.8 M7.7 12.7 H17.9" stroke="#a9aaae" stroke-width="2.7" stroke-linecap="round"/></svg>
<span class="a t" id="t86" style="left:473.50px;top:670.00px;font-size:21.95px;line-height:21.95px;color:#3f6a93;letter-spacing:0.370px;">when is allergy season</span>
<svg class="a" style="left:712px;top:672.45px;" width="20" height="18.2" viewBox="0 0 20 18.2"><rect x="1.45" y="1.45" width="16.8" height="14.9" rx="0.8" fill="none" stroke="#a9aaae" stroke-width="2.9"/><path d="M1.4 7.3 H18.3" stroke="#a9aaae" stroke-width="2.7"/><rect x="13.6" y="2.9" width="3.2" height="2.1" fill="#a9aaae"/></svg>
<div class="a" style="left:765px;top:668px;width:24px;height:24.3px;background:#c7e3fa;border-radius:5px;"></div>
<span class="a t" id="t87" style="left:774.60px;top:671.00px;font-size:18.81px;line-height:18.81px;color:#2f6ca3;font-weight:700;">I</span>
<span class="a t" id="t88" style="left:944.40px;top:670.00px;font-size:21.95px;line-height:21.95px;color:#191b23;letter-spacing:0.974px;">6,600</span>
<svg class="a" style="left:1032px;top:660px;" width="62" height="36" viewBox="0 0 62 36"><path d="M2.6 25.4 L7.3 23.0 L12.5 16.4 L17.5 20.9 L22.6 24.2 L27.6 27.6 L32.4 24.2 L37.8 18.8 L42.6 4.9 L47.7 9.3 L52.7 13.2 L57.5 23.0 L57.5 31.7 L2.6 31.7 Z" fill="#d9eafa"/><path d="M2.6 25.4 L7.3 23.0 L12.5 16.4 L17.5 20.9 L22.6 24.2 L27.6 27.6 L32.4 24.2 L37.8 18.8 L42.6 4.9 L47.7 9.3 L52.7 13.2 L57.5 23.0" fill="none" stroke="#6d99be" stroke-width="1.4" stroke-linejoin="round" stroke-linecap="round"/></svg>
<span class="a t" id="t89" style="left:1161.40px;top:670.00px;font-size:21.95px;line-height:21.95px;color:#191b23;letter-spacing:1.594px;">34</span>
<div class="a" style="left:1200px;top:671.3px;width:18.6px;height:18.6px;background:#f4bd47;border-radius:10px;"></div>
<span class="a t" id="t90" style="left:1304.50px;top:670.00px;font-size:21.95px;line-height:21.95px;color:#191b23;letter-spacing:0.132px;">0.85</span>
<span class="a t" id="t91" style="left:1395.50px;top:670.00px;font-size:21.95px;line-height:21.95px;color:#191b23;letter-spacing:-1.100px;">0.01</span>
<svg class="a" style="left:1460.6px;top:669.75px;" width="25" height="21" viewBox="0 0 25 21"><path d="M0 0 H23.3 V6.9 H20.3 V3.75 H3 V16.9 H10.1 V19.5 H0 Z" fill="#a9aaae"/><circle cx="16.2" cy="13.1" r="3.9" fill="none" stroke="#a9aaae" stroke-width="2.7"/><path d="M19 16 L22 18.7" stroke="#a9aaae" stroke-width="2.7" stroke-linecap="round"/></svg>
<div class="a" style="left:1497.4px;top:665px;width:1.5px;height:30.3px;background:#cfd1d8;"></div>
<span class="a t" id="t92" style="left:1511.60px;top:670.00px;font-size:21.95px;line-height:21.95px;color:#6c6e79;">4</span>
<svg class="a" style="left:1510px;top:696px;" width="16" height="3" viewBox="0 0 16 3"><path d="M0.9 1.5 H5 M9.9 1.5 H14" stroke="#6c6e79" stroke-width="1.5"/></svg>
<div class="a" style="left:362.5px;top:713px;width:1240px;height:1px;background:#dfe0e6;"></div>
<div class="a" style="left:392px;top:735.3px;width:24.5px;height:24.5px;background:#fff;border:2px solid #c9cbd2;border-radius:6px;"></div>
<svg class="a" style="left:441px;top:735.0px;" width="26" height="26" viewBox="0 0 26 26"><circle cx="12.8" cy="12.7" r="10.6" fill="none" stroke="#a9aaae" stroke-width="2.9"/><path d="M12.8 7.6 V17.8 M7.7 12.7 H17.9" stroke="#a9aaae" stroke-width="2.7" stroke-linecap="round"/></svg>
<span class="a t" id="t93" style="left:472.50px;top:737.00px;font-size:21.95px;line-height:21.95px;color:#3f6a93;letter-spacing:0.358px;">can allergies make you</span>
<span class="a t" id="t94" style="left:472.50px;top:768.00px;font-size:21.95px;line-height:21.95px;color:#3f6a93;letter-spacing:0.980px;">cough</span>
<svg class="a" style="left:544.3px;top:770.5px;" width="20" height="18.2" viewBox="0 0 20 18.2"><rect x="1.45" y="1.45" width="16.8" height="14.9" rx="0.8" fill="none" stroke="#a9aaae" stroke-width="2.9"/><path d="M1.4 7.3 H18.3" stroke="#a9aaae" stroke-width="2.7"/><rect x="13.6" y="2.9" width="3.2" height="2.1" fill="#a9aaae"/></svg>
<div class="a" style="left:765px;top:735.5px;width:24px;height:24.3px;background:#c7e3fa;border-radius:5px;"></div>
<span class="a t" id="t95" style="left:774.60px;top:739.00px;font-size:18.81px;line-height:18.81px;color:#2f6ca3;font-weight:700;">I</span>
<span class="a t" id="t96" style="left:945.40px;top:737.00px;font-size:21.95px;line-height:21.95px;color:#191b23;letter-spacing:0.724px;">5,400</span>
<svg class="a" style="left:1032px;top:727.5px;" width="62" height="36" viewBox="0 0 62 36"><path d="M2.6 25.6 L7.3 25.6 L12.5 24.0 L17.5 24.0 L22.6 25.9 L27.6 26.2 L32.4 27.4 L37.8 25.9 L42.6 16.0 L47.7 9.1 L52.7 9.1 L57.5 19.0 L57.5 31.9 L2.6 31.9 Z" fill="#d9eafa"/><path d="M2.6 25.6 L7.3 25.6 L12.5 24.0 L17.5 24.0 L22.6 25.9 L27.6 26.2 L32.4 27.4 L37.8 25.9 L42.6 16.0 L47.7 9.1 L52.7 9.1 L57.5 19.0" fill="none" stroke="#6d99be" stroke-width="1.4" stroke-linejoin="round" stroke-linecap="round"/></svg>
<span class="a t" id="t97" style="left:1164.09px;top:737.00px;font-size:21.95px;line-height:21.95px;color:#191b23;letter-spacing:-1.100px;">21</span>
<div class="a" style="left:1200px;top:738.8px;width:18.6px;height:18.6px;background:#72d3a4;border-radius:10px;"></div>
<span class="a t" id="t98" style="left:1302.60px;top:737.00px;font-size:21.95px;line-height:21.95px;color:#191b23;letter-spacing:0.766px;">0.42</span>
<span class="a t" id="t99" style="left:1395.50px;top:737.00px;font-size:21.95px;line-height:21.95px;color:#191b23;letter-spacing:-1.100px;">0.17</span>
<svg class="a" style="left:1460.6px;top:737.25px;" width="25" height="21" viewBox="0 0 25 21"><path d="M0 0 H23.3 V6.9 H20.3 V3.75 H3 V16.9 H10.1 V19.5 H0 Z" fill="#a9aaae"/><circle cx="16.2" cy="13.1" r="3.9" fill="none" stroke="#a9aaae" stroke-width="2.7"/><path d="M19 16 L22 18.7" stroke="#a9aaae" stroke-width="2.7" stroke-linecap="round"/></svg>
<div class="a" style="left:1497.4px;top:732.5px;width:1.5px;height:30.3px;background:#cfd1d8;"></div>
<span class="a t" id="t100" style="left:1511.60px;top:737.00px;font-size:21.95px;line-height:21.95px;color:#6c6e79;">5</span>
<svg class="a" style="left:1510px;top:763.5px;" width="16" height="3" viewBox="0 0 16 3"><path d="M0.9 1.5 H5 M9.9 1.5 H14" stroke="#6c6e79" stroke-width="1.5"/></svg>
<div class="a" style="left:362.5px;top:811px;width:1240px;height:1px;background:#dfe0e6;"></div>
<div class="a" style="left:392px;top:833.3px;width:24.5px;height:24.5px;background:#fff;border:2px solid #c9cbd2;border-radius:6px;"></div>
<svg class="a" style="left:441px;top:833.0px;" width="26" height="26" viewBox="0 0 26 26"><circle cx="12.8" cy="12.7" r="10.6" fill="none" stroke="#a9aaae" stroke-width="2.9"/><path d="M12.8 7.6 V17.8 M7.7 12.7 H17.9" stroke="#a9aaae" stroke-width="2.7" stroke-linecap="round"/></svg>
<span class="a t" id="t101" style="left:472.50px;top:835.00px;font-size:21.95px;line-height:21.95px;color:#3f6a93;letter-spacing:0.375px;">do allergies make you</span>
<span class="a t" id="t102" style="left:472.50px;top:866.00px;font-size:21.95px;line-height:21.95px;color:#3f6a93;letter-spacing:0.469px;">exhausted</span>
<svg class="a" style="left:586px;top:868.5px;" width="20" height="18.2" viewBox="0 0 20 18.2"><rect x="1.45" y="1.45" width="16.8" height="14.9" rx="0.8" fill="none" stroke="#a9aaae" stroke-width="2.9"/><path d="M1.4 7.3 H18.3" stroke="#a9aaae" stroke-width="2.7"/><rect x="13.6" y="2.9" width="3.2" height="2.1" fill="#a9aaae"/></svg>
<div class="a" style="left:765px;top:833.5px;width:24px;height:24.3px;background:#c7e3fa;border-radius:5px;"></div>
<span class="a t" id="t103" style="left:774.60px;top:837.00px;font-size:18.81px;line-height:18.81px;color:#2f6ca3;font-weight:700;">I</span>
<span class="a t" id="t104" style="left:945.40px;top:835.00px;font-size:21.95px;line-height:21.95px;color:#191b23;letter-spacing:0.724px;">5,400</span>
<svg class="a" style="left:1032px;top:825.5px;" width="62" height="36" viewBox="0 0 62 36"><path d="M2.6 29.1 L7.3 28.7 L12.1 29.9 L17.5 29.7 L22.9 30.5 L27.6 29.3 L32.4 30.9 L37.2 27.3 L42.0 17.1 L47.7 4.4 L52.7 15.6 L57.5 21.1 L57.5 31.5 L2.6 31.5 Z" fill="#d9eafa"/><path d="M2.6 29.1 L7.3 28.7 L12.1 29.9 L17.5 29.7 L22.9 30.5 L27.6 29.3 L32.4 30.9 L37.2 27.3 L42.0 17.1 L47.7 4.4 L52.7 15.6 L57.5 21.1" fill="none" stroke="#6d99be" stroke-width="1.4" stroke-linejoin="round" stroke-linecap="round"/></svg>
<span class="a t" id="t105" style="left:1162.00px;top:835.00px;font-size:21.95px;line-height:21.95px;color:#191b23;letter-spacing:0.994px;">27</span>
<div class="a" style="left:1200px;top:836.8px;width:18.6px;height:18.6px;background:#72d3a4;border-radius:10px;"></div>
<span class="a t" id="t106" style="left:1304.50px;top:835.00px;font-size:21.95px;line-height:21.95px;color:#191b23;letter-spacing:0.132px;">0.35</span>
<span class="a t" id="t107" style="left:1391.00px;top:835.00px;font-size:21.95px;line-height:21.95px;color:#191b23;letter-spacing:0.399px;">0.09</span>
<svg class="a" style="left:1460.6px;top:835.25px;" width="25" height="21" viewBox="0 0 25 21"><path d="M0 0 H23.3 V6.9 H20.3 V3.75 H3 V16.9 H10.1 V19.5 H0 Z" fill="#a9aaae"/><circle cx="16.2" cy="13.1" r="3.9" fill="none" stroke="#a9aaae" stroke-width="2.7"/><path d="M19 16 L22 18.7" stroke="#a9aaae" stroke-width="2.7" stroke-linecap="round"/></svg>
<div class="a" style="left:1497.4px;top:830.5px;width:1.5px;height:30.3px;background:#cfd1d8;"></div>
<span class="a t" id="t108" style="left:1511.60px;top:835.00px;font-size:21.95px;line-height:21.95px;color:#6c6e79;">4</span>
<svg class="a" style="left:1510px;top:861.5px;" width="16" height="3" viewBox="0 0 16 3"><path d="M0.9 1.5 H5 M9.9 1.5 H14" stroke="#6c6e79" stroke-width="1.5"/></svg>
<div class="a" style="left:362.5px;top:909px;width:1240px;height:1px;background:#dfe0e6;"></div>
<div class="a" style="left:392px;top:931.3px;width:24.5px;height:24.5px;background:#fff;border:2px solid #c9cbd2;border-radius:6px;"></div>
<svg class="a" style="left:441px;top:931.0px;" width="26" height="26" viewBox="0 0 26 26"><circle cx="12.8" cy="12.7" r="10.6" fill="none" stroke="#a9aaae" stroke-width="2.9"/><path d="M12.8 7.6 V17.8 M7.7 12.7 H17.9" stroke="#a9aaae" stroke-width="2.7" stroke-linecap="round"/></svg>
<span class="a t" id="t109" style="left:472.50px;top:933.00px;font-size:21.95px;line-height:21.95px;color:#3f6a93;letter-spacing:0.375px;">do allergies make you</span>
<span class="a t" id="t110" style="left:472.50px;top:964.00px;font-size:21.95px;line-height:21.95px;color:#3f6a93;letter-spacing:0.628px;">tired</span>
<svg class="a" style="left:526.7px;top:966.5px;" width="20" height="18.2" viewBox="0 0 20 18.2"><rect x="1.45" y="1.45" width="16.8" height="14.9" rx="0.8" fill="none" stroke="#a9aaae" stroke-width="2.9"/><path d="M1.4 7.3 H18.3" stroke="#a9aaae" stroke-width="2.7"/><rect x="13.6" y="2.9" width="3.2" height="2.1" fill="#a9aaae"/></svg>
<div class="a" style="left:765px;top:931.5px;width:24px;height:24.3px;background:#c7e3fa;border-radius:5px;"></div>
<span class="a t" id="t111" style="left:774.60px;top:935.00px;font-size:18.81px;line-height:18.81px;color:#2f6ca3;font-weight:700;">I</span>
<span class="a t" id="t112" style="left:945.40px;top:933.00px;font-size:21.95px;line-height:21.95px;color:#191b23;letter-spacing:0.724px;">5,400</span>
<svg class="a" style="left:1032px;top:923.5px;" width="62" height="36" viewBox="0 0 62 36"><path d="M2.6 27.5 L7.3 26.3 L12.1 25.7 L17.5 26.5 L22.9 28.5 L27.6 27.5 L32.4 28.5 L37.2 26.7 L42.0 17.3 L47.7 4.6 L52.7 4.6 L57.5 19.7 L57.5 31.7 L2.6 31.7 Z" fill="#d9eafa"/><path d="M2.6 27.5 L7.3 26.3 L12.1 25.7 L17.5 26.5 L22.9 28.5 L27.6 27.5 L32.4 28.5 L37.2 26.7 L42.0 17.3 L47.7 4.6 L52.7 4.6 L57.5 19.7" fill="none" stroke="#6d99be" stroke-width="1.4" stroke-linejoin="round" stroke-linecap="round"/></svg>
<span class="a t" id="t113" style="left:1164.09px;top:933.00px;font-size:21.95px;line-height:21.95px;color:#191b23;letter-spacing:-1.100px;">19</span>
<div class="a" style="left:1200px;top:934.8px;width:18.6px;height:18.6px;background:#72d3a4;border-radius:10px;"></div>
<span class="a t" id="t114" style="left:1304.50px;top:933.00px;font-size:21.95px;line-height:21.95px;color:#191b23;letter-spacing:0.132px;">0.35</span>
<span class="a t" id="t115" style="left:1391.00px;top:933.00px;font-size:21.95px;line-height:21.95px;color:#191b23;letter-spacing:0.399px;">0.09</span>
<svg class="a" style="left:1460.6px;top:933.25px;" width="25" height="21" viewBox="0 0 25 21"><path d="M0 0 H23.3 V6.9 H20.3 V3.75 H3 V16.9 H10.1 V19.5 H0 Z" fill="#a9aaae"/><circle cx="16.2" cy="13.1" r="3.9" fill="none" stroke="#a9aaae" stroke-width="2.7"/><path d="M19 16 L22 18.7" stroke="#a9aaae" stroke-width="2.7" stroke-linecap="round"/></svg>
<div class="a" style="left:1497.4px;top:928.5px;width:1.5px;height:30.3px;background:#cfd1d8;"></div>
<span class="a t" id="t116" style="left:1511.60px;top:933.00px;font-size:21.95px;line-height:21.95px;color:#6c6e79;">4</span>
<svg class="a" style="left:1510px;top:959.5px;" width="16" height="3" viewBox="0 0 16 3"><path d="M0.9 1.5 H5 M9.9 1.5 H14" stroke="#6c6e79" stroke-width="1.5"/></svg>
<div class="a" style="left:362.5px;top:1007px;width:1240px;height:1px;background:#dfe0e6;"></div>
<div class="a" style="left:392px;top:1029.3px;width:24.5px;height:24.5px;background:#fff;border:2px solid #c9cbd2;border-radius:6px;"></div>
<svg class="a" style="left:441px;top:1029.0px;" width="26" height="26" viewBox="0 0 26 26"><circle cx="12.8" cy="12.7" r="10.6" fill="none" stroke="#a9aaae" stroke-width="2.9"/><path d="M12.8 7.6 V17.8 M7.7 12.7 H17.9" stroke="#a9aaae" stroke-width="2.7" stroke-linecap="round"/></svg>
<span class="a t" id="t117" style="left:471.50px;top:1031.00px;font-size:21.95px;line-height:21.95px;color:#3f6a93;letter-spacing:0.443px;">how to stop allergies</span>
<span class="a t" id="t118" style="left:471.50px;top:1062.00px;font-size:21.95px;line-height:21.95px;color:#3f6a93;letter-spacing:0.455px;">immediately naturally</span>
<svg class="a" style="left:696px;top:1064.5px;" width="20" height="18.2" viewBox="0 0 20 18.2"><rect x="1.45" y="1.45" width="16.8" height="14.9" rx="0.8" fill="none" stroke="#a9aaae" stroke-width="2.9"/><path d="M1.4 7.3 H18.3" stroke="#a9aaae" stroke-width="2.7"/><rect x="13.6" y="2.9" width="3.2" height="2.1" fill="#a9aaae"/></svg>
<div class="a" style="left:765px;top:1029.5px;width:24px;height:24.3px;background:#c7e3fa;border-radius:5px;"></div>
<span class="a t" id="t119" style="left:774.60px;top:1033.00px;font-size:18.81px;line-height:18.81px;color:#2f6ca3;font-weight:700;">I</span>
<span class="a t" id="t120" style="left:945.40px;top:1031.00px;font-size:21.95px;line-height:21.95px;color:#191b23;letter-spacing:0.724px;">5,400</span>
<svg class="a" style="left:1032px;top:1021.5px;" width="62" height="36" viewBox="0 0 62 36"><path d="M2.6 19.4 L7.3 21.4 L12.5 19.4 L17.5 21.4 L22.6 25.7 L27.6 25.7 L32.4 24.8 L37.8 23.3 L42.6 9.8 L47.7 9.8 L52.7 13.4 L57.5 21.0 L57.5 31.7 L2.6 31.7 Z" fill="#d9eafa"/><path d="M2.6 19.4 L7.3 21.4 L12.5 19.4 L17.5 21.4 L22.6 25.7 L27.6 25.7 L32.4 24.8 L37.8 23.3 L42.6 9.8 L47.7 9.8 L52.7 13.4 L57.5 21.0" fill="none" stroke="#6d99be" stroke-width="1.4" stroke-linejoin="round" stroke-linecap="round"/></svg>
<span class="a t" id="t121" style="left:1162.00px;top:1031.00px;font-size:21.95px;line-height:21.95px;color:#191b23;letter-spacing:0.994px;">39</span>
<div class="a" style="left:1200px;top:1032.8px;width:18.6px;height:18.6px;background:#f4bd47;border-radius:10px;"></div>
<span class="a t" id="t122" style="left:1304.00px;top:1031.00px;font-size:21.95px;line-height:21.95px;color:#191b23;letter-spacing:0.299px;">0.60</span>
<span class="a t" id="t123" style="left:1391.00px;top:1031.00px;font-size:21.95px;line-height:21.95px;color:#191b23;letter-spacing:0.399px;">0.40</span>
<svg class="a" style="left:1460.6px;top:1031.25px;" width="25" height="21" viewBox="0 0 25 21"><path d="M0 0 H23.3 V6.9 H20.3 V3.75 H3 V16.9 H10.1 V19.5 H0 Z" fill="#a9aaae"/><circle cx="16.2" cy="13.1" r="3.9" fill="none" stroke="#a9aaae" stroke-width="2.7"/><path d="M19 16 L22 18.7" stroke="#a9aaae" stroke-width="2.7" stroke-linecap="round"/></svg>
<div class="a" style="left:1497.4px;top:1026.5px;width:1.5px;height:30.3px;background:#cfd1d8;"></div>
<span class="a t" id="t124" style="left:1511.60px;top:1031.00px;font-size:21.95px;line-height:21.95px;color:#6c6e79;">5</span>
<svg class="a" style="left:1510px;top:1057.5px;" width="16" height="3" viewBox="0 0 16 3"><path d="M0.9 1.5 H5 M9.9 1.5 H14" stroke="#6c6e79" stroke-width="1.5"/></svg>
<div class="a" style="left:362.5px;top:1105px;width:1240px;height:1px;background:#dfe0e6;"></div>
<div class="a" style="left:392px;top:1127.3px;width:24.5px;height:24.5px;background:#fff;border:2px solid #c9cbd2;border-radius:6px;"></div>
<svg class="a" style="left:441px;top:1127.0px;" width="26" height="26" viewBox="0 0 26 26"><circle cx="12.8" cy="12.7" r="10.6" fill="none" stroke="#a9aaae" stroke-width="2.9"/><path d="M12.8 7.6 V17.8 M7.7 12.7 H17.9" stroke="#a9aaae" stroke-width="2.7" stroke-linecap="round"/></svg>
<span class="a t" id="t125" style="left:472.50px;top:1129.00px;font-size:21.95px;line-height:21.95px;color:#3f6a93;letter-spacing:0.331px;">are allergies genetic</span>
<svg class="a" style="left:685.4px;top:1131.95px;" width="20" height="18.2" viewBox="0 0 20 18.2"><rect x="1.45" y="1.45" width="16.8" height="14.9" rx="0.8" fill="none" stroke="#a9aaae" stroke-width="2.9"/><path d="M1.4 7.3 H18.3" stroke="#a9aaae" stroke-width="2.7"/><rect x="13.6" y="2.9" width="3.2" height="2.1" fill="#a9aaae"/></svg>
<div class="a" style="left:765px;top:1127.5px;width:24px;height:24.3px;background:#c7e3fa;border-radius:5px;"></div>
<span class="a t" id="t126" style="left:774.60px;top:1131.00px;font-size:18.81px;line-height:18.81px;color:#2f6ca3;font-weight:700;">I</span>
<span class="a t" id="t127" style="left:945.40px;top:1129.00px;font-size:21.95px;line-height:21.95px;color:#191b23;letter-spacing:0.724px;">4,400</span>
<svg class="a" style="left:1032px;top:1119.5px;" width="62" height="36" viewBox="0 0 62 36"><path d="M2.6 16.9 L7.3 16.9 L12.5 16.9 L17.5 14.0 L22.6 16.9 L27.6 16.9 L32.4 5.2 L37.8 16.6 L42.6 10.4 L47.7 5.2 L52.7 9.8 L57.5 13.4 L57.5 32.2 L2.6 32.2 Z" fill="#d9eafa"/><path d="M2.6 16.9 L7.3 16.9 L12.5 16.9 L17.5 14.0 L22.6 16.9 L27.6 16.9 L32.4 5.2 L37.8 16.6 L42.6 10.4 L47.7 5.2 L52.7 9.8 L57.5 13.4" fill="none" stroke="#6d99be" stroke-width="1.4" stroke-linejoin="round" stroke-linecap="round"/></svg>
<span class="a t" id="t128" style="left:1162.00px;top:1129.00px;font-size:21.95px;line-height:21.95px;color:#191b23;letter-spacing:0.994px;">35</span>
<div class="a" style="left:1200px;top:1130.8px;width:18.6px;height:18.6px;background:#f4bd47;border-radius:10px;"></div>
<span class="a t" id="t129" style="left:1303.00px;top:1129.00px;font-size:21.95px;line-height:21.95px;color:#191b23;letter-spacing:0.632px;">0.00</span>
<span class="a t" id="t130" style="left:1391.00px;top:1129.00px;font-size:21.95px;line-height:21.95px;color:#191b23;letter-spacing:0.399px;">0.00</span>
<svg class="a" style="left:1460.6px;top:1129.25px;" width="25" height="21" viewBox="0 0 25 21"><path d="M0 0 H23.3 V6.9 H20.3 V3.75 H3 V16.9 H10.1 V19.5 H0 Z" fill="#a9aaae"/><circle cx="16.2" cy="13.1" r="3.9" fill="none" stroke="#a9aaae" stroke-width="2.7"/><path d="M19 16 L22 18.7" stroke="#a9aaae" stroke-width="2.7" stroke-linecap="round"/></svg>
<div class="a" style="left:1497.4px;top:1124.5px;width:1.5px;height:30.3px;background:#cfd1d8;"></div>
<span class="a t" id="t131" style="left:1511.60px;top:1129.00px;font-size:21.95px;line-height:21.95px;color:#6c6e79;">4</span>
<svg class="a" style="left:1510px;top:1155.5px;" width="16" height="3" viewBox="0 0 16 3"><path d="M0.9 1.5 H5 M9.9 1.5 H14" stroke="#6c6e79" stroke-width="1.5"/></svg>
</body></html>
